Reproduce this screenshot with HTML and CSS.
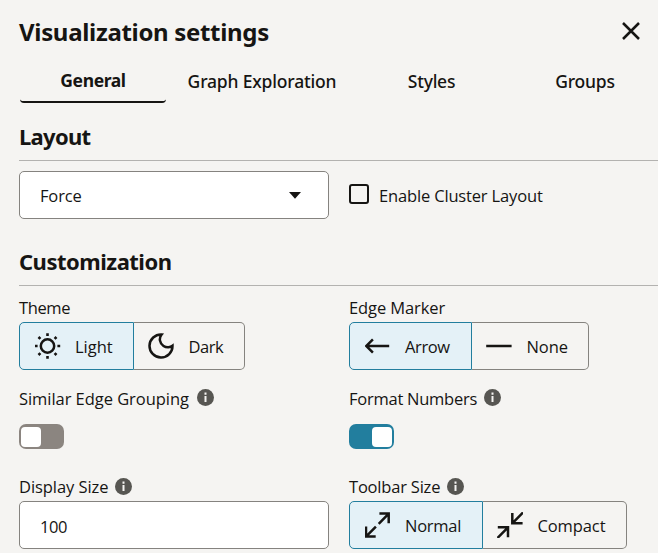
FILE: index.html
```html
<!DOCTYPE html>
<html lang="en">
<head>
<meta charset="utf-8">
<title>Visualization settings</title>
<link rel="stylesheet" href="styles.css">
</head>
<body>
<main class="panel">
  <header class="header">
    <h1 class="title">Visualization settings</h1>
    <button class="close" aria-label="Close"><svg width="18" height="18" viewBox="0 0 18 18"><path d="M1 1 17 17M17 1 1 17" stroke="currentColor" stroke-width="2.5"/></svg></button>
  </header>
  <nav class="tabs">
    <a class="tab tab-active">General</a>
    <a class="tab tab-wide">Graph Exploration</a>
    <a class="tab">Styles</a>
    <a class="tab">Groups</a>
  </nav>

  <section class="section">
    <h2 class="heading heading-layout">Layout</h2>
    <div class="grid">
      <div class="box select"><span>Force</span><svg width="12" height="7" viewBox="0 0 12 7"><path d="M0 0H12L6 6.8Z" fill="currentColor"/></svg></div>
      <label class="check"><span class="check-box"></span><span class="check-label">Enable Cluster Layout</span></label>
    </div>
  </section>

  <section class="section">
    <h2 class="heading">Customization</h2>
    <div class="grid fields">
      <div class="field">
        <div class="label track-4">Theme</div>
        <div class="group">
          <div class="option selected theme-light">
            <svg class="icon" viewBox="0 0 26 26"><circle cx="12.5" cy="13" r="6.7"/><path stroke-width="2.6" d="M12.5 .2v2.8M12.5 23v2.8M-.2 13h2.8M22.4 13h2.8M3.5 4l1.9 1.9M19.6 20.1 21.5 22M3.5 22l1.9-1.9M19.6 5.9 21.5 4"/></svg>
            <span>Light</span>
          </div>
          <div class="option theme-dark">
            <svg class="icon" viewBox="0 0 26 26"><path d="M13.6 1.5A11.5 11.5 0 1 0 24.5 12.8C22.5 14.5 18.5 15 15.5 12.9 11.3 10 10.8 5 13.6 1.5Z"/></svg>
            <span class="track-6">Dark</span>
          </div>
        </div>
      </div>
      <div class="field">
        <div class="label track-1">Edge Marker</div>
        <div class="group">
          <div class="option selected marker-arrow">
            <svg class="icon" viewBox="0 0 26 26"><path d="M1.2 13H24.2M7.9 6.3 1.2 13l6.7 6.7"/></svg>
            <span class="track-4">Arrow</span>
          </div>
          <div class="option marker-none">
            <svg class="icon" viewBox="0 0 26 26"><path d="M.2 13H25.6"/></svg>
            <span class="track-1">None</span>
          </div>
        </div>
      </div>

      <div class="field">
        <div class="label label-grouping">Similar Edge Grouping <svg class="info" viewBox="0 0 17 17"><circle cx="8.5" cy="8.5" r="8.5" fill="#575652"/><path d="M8.5 3.6v2.1M8.5 7v6" stroke="#f5f4f2" stroke-width="2"/></svg></div>
        <div class="toggle"><span class="knob"></span></div>
      </div>
      <div class="field">
        <div class="label track-3">Format Numbers <svg class="info" viewBox="0 0 17 17"><circle cx="8.5" cy="8.5" r="8.5" fill="#575652"/><path d="M8.5 3.6v2.1M8.5 7v6" stroke="#f5f4f2" stroke-width="2"/></svg></div>
        <div class="toggle on"><span class="knob"></span></div>
      </div>

      <div class="field">
        <div class="label label-size">Display Size <svg class="info" viewBox="0 0 17 17"><circle cx="8.5" cy="8.5" r="8.5" fill="#575652"/><path d="M8.5 3.6v2.1M8.5 7v6" stroke="#f5f4f2" stroke-width="2"/></svg></div>
        <div class="box input track-4">100</div>
      </div>
      <div class="field">
        <div class="label label-toolbar">Toolbar Size <svg class="info" viewBox="0 0 17 17"><circle cx="8.5" cy="8.5" r="8.5" fill="#575652"/><path d="M8.5 3.6v2.1M8.5 7v6" stroke="#f5f4f2" stroke-width="2"/></svg></div>
        <div class="group group-size">
          <div class="option selected size-normal">
            <svg class="icon" viewBox="0 0 26 26"><path d="M14.4 1.6H23.7V11.3M23.7 1.6 13.7 11.8M1 14.5V24.6H10.7M1 24.6 10.9 14.5"/></svg>
            <span class="track-3">Normal</span>
          </div>
          <div class="option size-compact">
            <svg class="icon" viewBox="0 0 26 26"><path d="M15.3 1.1V11.3H25.6M15.3 11.3 26 .5M.8 15.3H11V25.3M11 15.3 .5 26"/></svg>
            <span class="track-1">Compact</span>
          </div>
        </div>
      </div>
    </div>
  </section>
</main>
</body>
</html>
```
FILE: styles.css
```css
* { box-sizing: border-box; }

body {
  margin: 0;
  background: #f5f4f2;
  color: #161513;
  font-family: "Open Sans", "Noto Sans", sans-serif;
  font-size: 16.5px;
  line-height: 24px;
}

.panel {
  height: 553px;
  padding-left: 19px;
  overflow: hidden;
}

.header {
  display: flex;
  justify-content: space-between;
  height: 66px;
  padding: 16px 18px 0 0;
}

.title {
  margin: 0;
  font: 700 24px/32px "Noto Sans", sans-serif;
  letter-spacing: -0.32px;
}

.close {
  width: 18px;
  height: 18px;
  margin-top: 6px;
  padding: 0;
  border: 0;
  background: none;
  color: inherit;
}

.close svg { display: block; }

.tabs {
  display: grid;
  grid-template-columns: 146px 192px 147px 160px;
  height: 37px;
  padding-left: 1px;
  font: 500 17.5px/30px "Noto Sans", sans-serif;
  text-align: center;
}

.tab {
  letter-spacing: -0.25px;
}

.tab-wide { letter-spacing: -0.18px; }

.tab-active {
  border-bottom: 2px solid #161513;
  border-radius: 4px;
  font-weight: 700;
  line-height: 28px;
  letter-spacing: -0.4px;
}

.section { height: 125px; }

.tabs + .section { padding-top: 17px; }

.heading {
  height: 41px;
  margin: 0;
  border-bottom: 1px solid #b3b2b0;
  font: 700 22px/32px "Noto Sans", sans-serif;
  letter-spacing: -0.5px;
}

.heading-layout { letter-spacing: -0.7px; }

.tabs + .section + .section .heading { margin-top: 17px; }

.grid {
  display: grid;
  grid-template-columns: 310px 290px;
  column-gap: 20px;
  padding-top: 10px;
}

.fields {
  grid-template-rows: 90px 89px 74px;
}

.box {
  display: flex;
  align-items: center;
  width: 310px;
  height: 48px;
  padding: 1px 20px 0;
  border: 1px solid #85837f;
  border-radius: 5px;
  background: #fff;
}

.input { padding-top: 3px; }

.select {
  justify-content: space-between;
  padding-right: 27px;
}

.select span { letter-spacing: -0.15px; }
.select svg { margin-top: -1px; }

.check {
  display: flex;
  align-items: center;
  height: 48px;
  gap: 10px;
}

.check-box {
  width: 20px;
  height: 20px;
  margin-top: -2px;
  border: 2px solid #161513;
  border-radius: 3px;
}

.check-label {
  padding-top: 1px;
  letter-spacing: -0.16px;
}

.label {
  display: flex;
  align-items: center;
  height: 26px;
  padding-bottom: 2px;
  white-space: nowrap;
}

.field:nth-child(3) .label,
.field:nth-child(4) .label { padding-bottom: 0; }

.info {
  width: 17px;
  height: 17px;
  margin: -3px 0 0 7px;
}

.label-grouping { letter-spacing: -0.05px; }
.label-grouping .info { margin-left: 8px; }
.label-size { letter-spacing: -0.06px; }
.label-size .info { margin-left: 6.5px; }
.label-toolbar { letter-spacing: -0.2px; }
.label-size .info,
.label-toolbar .info { margin-top: -2px; }

.group {
  display: flex;
  height: 48px;
}

.option {
  display: flex;
  align-items: center;
  gap: 14.5px;
  padding: 1px 0 0 14px;
  border: 1px solid #85837f;
  border-left: 0;
  border-radius: 0 5px 5px 0;
}

.group-size .option { padding-top: 2px; }
.group-size .icon { margin-top: -2px; }

.option.selected {
  padding-left: 14.5px;
  border: 1px solid #227e9e;
  border-radius: 5px 0 0 5px;
  background: #e4f1f7;
}

.theme-light { width: 115px; }
.theme-dark { width: 111px; }
.marker-arrow { width: 123px; }
.marker-none { width: 117px; }
.size-normal { width: 134px; }
.size-compact { width: 144px; }

.icon {
  width: 26px;
  height: 26px;
  margin-top: -1px;
  fill: none;
  stroke: #161513;
  stroke-width: 2.5;
}

.toggle {
  display: flex;
  width: 45px;
  height: 25px;
  margin-top: 12px;
  padding: 3px 2px 2px;
  border-radius: 7px;
  background: #8b8580;
}

.toggle.on {
  justify-content: flex-end;
  background: #227e9e;
}

.knob {
  width: 20px;
  height: 20px;
  border-radius: 4px;
  background: #fff;
}

.track-1 { letter-spacing: -0.1px; }
.track-3 { letter-spacing: -0.25px; }
.track-4 { letter-spacing: -0.4px; }
.track-6 { letter-spacing: -0.5px; }
```
